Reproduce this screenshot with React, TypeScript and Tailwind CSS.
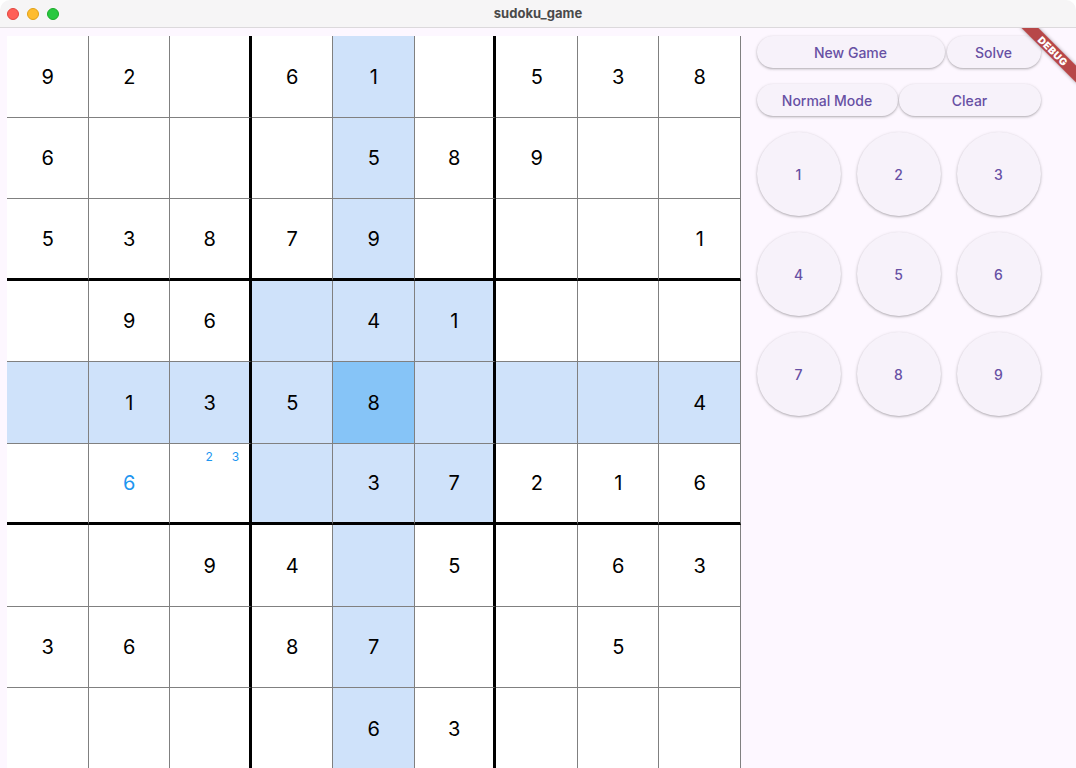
import React from "react";

const GRID: (number | null)[][] = [
  [9, 2, null, 6, 1, null, 5, 3, 8],
  [6, null, null, null, 5, 8, 9, null, null],
  [5, 3, 8, 7, 9, null, null, null, 1],
  [null, 9, 6, null, 4, 1, null, null, null],
  [null, 1, 3, 5, 8, null, null, null, 4],
  [null, 6, null, null, 3, 7, 2, 1, 6],
  [null, null, 9, 4, null, 5, null, 6, 3],
  [3, 6, null, 8, 7, null, null, 5, null],
  [null, null, null, null, 6, 3, null, null, null],
];

const SEL_R = 4;
const SEL_C = 4;

function Cell({ r, c }: { r: number; c: number }) {
  const v = GRID[r][c];
  const selected = r === SEL_R && c === SEL_C;
  const related =
    r === SEL_R ||
    c === SEL_C ||
    (Math.floor(r / 3) === Math.floor(SEL_R / 3) && Math.floor(c / 3) === Math.floor(SEL_C / 3));
  const bg = selected ? "bg-[#86c4f7]" : related ? "bg-[#cfe2fa]" : "bg-white";
  const right = c === 2 || c === 5 ? "border-r-[3px] border-r-black" : "border-r border-r-[#808080]";
  const bottom = r === 2 || r === 5 ? "border-b-[3px] border-b-black" : "border-b border-b-[#808080]";
  const isUser = r === 5 && c === 1;
  const hasNotes = r === 5 && c === 2;
  return (
    <div className={`relative flex items-center justify-center ${bg} ${right} ${bottom}`}>
      {hasNotes ? (
        <div className="absolute inset-0 grid grid-cols-3 grid-rows-3">
          {[1, 2, 3, 4, 5, 6, 7, 8, 9].map((n) => (
            <div key={n} className="flex items-center justify-center text-[12px] leading-none text-[#1e96f0]">
              {n === 2 || n === 3 ? n : ""}
            </div>
          ))}
        </div>
      ) : v !== null ? (
        <span className={`text-[20px] leading-none pl-[1px] pt-[1px] ${isUser ? "text-[#1e96f0]" : "text-black"}`}>
          {v}
        </span>
      ) : null}
    </div>
  );
}

const shadow = "shadow-[0_1px_2px_rgba(0,0,0,0.22),0_1px_3px_1px_rgba(0,0,0,0.08)]";

function Pill({ label, w }: { label: string; w: string }) {
  return (
    <div
      className={`${w} h-[32px] rounded-full bg-[#f7f2fa] ${shadow} flex items-center justify-center text-[14px] font-medium text-[#6750a4]`}
    >
      {label}
    </div>
  );
}

export default function App() {
  return (
    <div
      className="w-[1076px] h-[768px] overflow-hidden bg-white flex flex-col"
      style={{ fontFamily: "Inter, 'Noto Sans', sans-serif" }}
    >
      {/* Title bar */}
      <div className="relative h-[28px] shrink-0 bg-[#f6f5f6] border-b border-b-[#dcd9dc] flex items-center rounded-t-[10px]">
        <div className="flex items-center gap-[8px] pl-[7px]">
          <div className="w-[12px] h-[12px] rounded-full bg-[#ff5f57] border border-[#e2463f]" />
          <div className="w-[12px] h-[12px] rounded-full bg-[#febc2e] border border-[#e1a116]" />
          <div className="w-[12px] h-[12px] rounded-full bg-[#28c840] border border-[#1aab29]" />
        </div>
        <div className="absolute inset-0 flex items-center justify-center text-[13px] font-bold text-[#4a4a4a]">
          sudoku_game
        </div>
      </div>

      {/* Content */}
      <div className="relative flex-1 min-h-0 bg-[#fdf7ff] flex overflow-hidden">
        <div className="pl-[7px] pt-2 shrink-0">
          <div className="grid grid-cols-[repeat(9,81.5px)] grid-rows-[repeat(9,81.5px)] bg-white">
            {GRID.map((row, r) => row.map((_, c) => <Cell key={`${r}-${c}`} r={r} c={c} />))}
          </div>
        </div>

        <div className="pl-4 pt-2 flex flex-col w-[300px]">
          <div className="flex gap-[2px]">
            <Pill label="New Game" w="w-[188px]" />
            <Pill label="Solve" w="w-[94px]" />
          </div>
          <div className="flex gap-[1px] mt-4">
            <Pill label="Normal Mode" w="w-[141px]" />
            <Pill label="Clear" w="w-[142px]" />
          </div>
          <div className="mt-4 grid grid-cols-[repeat(3,84px)] gap-4">
            {[1, 2, 3, 4, 5, 6, 7, 8, 9].map((n) => (
              <div
                key={n}
                className={`w-[84px] h-[84px] rounded-full bg-[#f7f2fa] ${shadow} flex items-center justify-center text-[14px] font-medium text-[#6750a4]`}
              >
                {n}
              </div>
            ))}
          </div>
        </div>

        {/* Debug banner */}
        <div className="absolute right-0 top-0 w-[80px] h-[80px] overflow-hidden pointer-events-none">
          <div className="absolute left-[17px] top-[17px] w-[80px] h-[12px] rotate-45 bg-[rgba(170,40,40,0.85)] shadow-[0_0_4px_rgba(0,0,0,0.35)] flex items-center justify-center text-white text-[10px] font-black leading-none tracking-[0.5px]">
            DEBUG
          </div>
        </div>
      </div>
    </div>
  );
}
